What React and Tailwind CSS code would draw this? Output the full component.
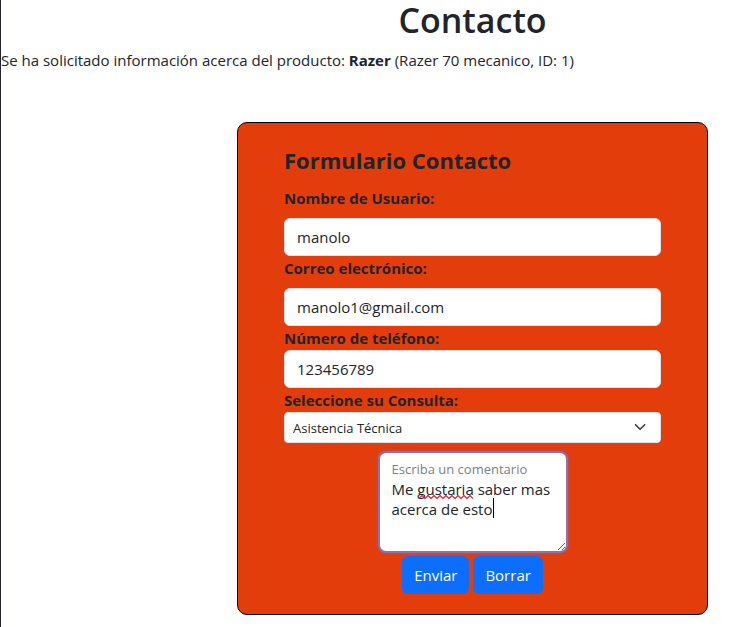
import { useState } from "react";

const inputClass =
  "block h-[38px] w-full rounded-md border border-[#dee2e6] bg-white px-3 text-[15px] leading-6 text-[#212529]";
const labelClass = "block text-[15px] font-bold leading-6";
const buttonClass =
  "h-[38px] rounded-md bg-[#0d6efd] px-3 text-[15px] leading-6 text-white";

export default function App() {
  const [comment, setComment] = useState("Me gustaria saber mas acerca de esto");

  return (
    <div className="min-h-screen border-l border-[#212529] bg-white font-['Open_Sans','Noto_Sans',sans-serif] text-[15px] leading-6 text-[#212529]">
      <h1 className="pl-[236px] pr-[22px] text-center text-[34px] font-semibold leading-10">
        Contacto
      </h1>
      <p className="mt-2 whitespace-nowrap">
        Se ha solicitado información acerca del producto: <b>Razer</b> (Razer 70 mecanico, ID: 1)
      </p>
      <main className="pb-3 pl-[236px] pr-[22px] pt-[50px]">
        <form
          className="rounded-[10px] border border-black bg-[#e43d0c] px-[46px] pb-5 pt-[22px]"
          onSubmit={(e) => e.preventDefault()}
        >
          <h2 className="mb-[11px] text-[22px] font-bold leading-[30px]">Formulario Contacto</h2>

          <label htmlFor="usuario" className={`${labelClass} mb-2`}>Nombre de Usuario:</label>
          <input id="usuario" type="text" defaultValue="manolo" className={inputClass} />

          <label htmlFor="correo" className={`${labelClass} mb-2`}>Correo electrónico:</label>
          <input id="correo" type="email" defaultValue="manolo1@gmail.com" className={inputClass} />

          <label htmlFor="telefono" className={labelClass}>Número de teléfono:</label>
          <input id="telefono" type="tel" defaultValue="123456789" className={inputClass} />

          <label htmlFor="consulta" className={labelClass}>Seleccione su Consulta:</label>
          <div className="relative">
            <select
              id="consulta"
              className="block h-[31px] w-full appearance-none rounded border border-[#dee2e6] bg-white pl-2 pr-9 text-[13px] text-[#212529]"
            >
              <option>Asistencia Técnica</option>
            </select>
            <svg
              viewBox="0 0 16 16"
              className="pointer-events-none absolute right-[13px] top-2 size-4"
              fill="none"
              stroke="#343a40"
              strokeWidth="1.6"
              strokeLinecap="round"
              strokeLinejoin="round"
              aria-hidden="true"
            >
              <path d="m3.5 4.7 4.6 4.6 4.6-4.6" />
            </svg>
          </div>

          <div className="relative mx-auto mt-2 w-[190px]">
            <textarea
              id="comentario"
              spellCheck={false}
              value={comment}
              onChange={(e) => setComment(e.target.value)}
              className="block h-[102px] w-full rounded-lg border-2 border-[#9a6f9d] bg-white px-3 pt-[26px] text-[15px] leading-5 text-[#212529] shadow-[0_0_2px_1px_#ae5161]"
            />
            <label
              htmlFor="comentario"
              className="absolute left-[14px] top-2 text-[13px] leading-5 text-[#7b7f83]"
            >
              Escriba un comentario
            </label>
            <svg
              viewBox="0 0 57 4"
              className="pointer-events-none absolute left-[41px] top-[44px] h-1 w-[57px]"
              fill="none"
              stroke="#e0242f"
              strokeWidth="1.2"
              aria-hidden="true"
            >
              <path d="M0 3.5l3-3 3 3 3-3 3 3 3-3 3 3 3-3 3 3 3-3 3 3 3-3 3 3 3-3 3 3 3-3 3 3 3-3 3 3" />
            </svg>
            <span
              className="pointer-events-none absolute left-[115px] top-[47px] h-5 w-px bg-black"
              aria-hidden="true"
            />
          </div>

          <div className="mt-[3px] flex justify-center gap-1">
            <button type="submit" className={buttonClass}>Enviar</button>
            <button type="reset" className={buttonClass}>Borrar</button>
          </div>
        </form>
      </main>
    </div>
  );
}
